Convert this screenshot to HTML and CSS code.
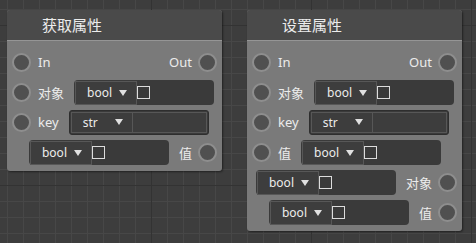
FILE: index.html
```html
<!DOCTYPE html>
<html lang="zh-CN">
<head>
    <meta charset="UTF-8">
    <meta name="viewport" content="width=device-width, initial-scale=1.0">
    <title>节点编辑器</title>
    <link rel="stylesheet" href="styles.css">
</head>
<body>
    <div class="canvas">
        <div class="node">
            <div class="node-title">获取属性</div>
            <div class="node-body">
                <div class="row">
                    <span class="port"></span>
                    <span class="label">In</span>
                    <span class="label label-out">Out</span>
                    <span class="port"></span>
                </div>
                <div class="row">
                    <span class="port"></span>
                    <span class="label">对象</span>
                    <div class="field">
                        <div class="select"><span>bool</span><i class="caret"></i></div>
                        <span class="check"></span>
                    </div>
                </div>
                <div class="row">
                    <span class="port"></span>
                    <span class="label">key</span>
                    <div class="field field-input">
                        <div class="select"><span>str</span><i class="caret"></i></div>
                        <div class="text-box"></div>
                    </div>
                </div>
                <div class="row row-right">
                    <div class="field">
                        <div class="select"><span>bool</span><i class="caret"></i></div>
                        <span class="check"></span>
                    </div>
                    <span class="label">值</span>
                    <span class="port"></span>
                </div>
            </div>
        </div>

        <div class="node">
            <div class="node-title">设置属性</div>
            <div class="node-body">
                <div class="row">
                    <span class="port"></span>
                    <span class="label">In</span>
                    <span class="label label-out">Out</span>
                    <span class="port"></span>
                </div>
                <div class="row">
                    <span class="port"></span>
                    <span class="label">对象</span>
                    <div class="field">
                        <div class="select"><span>bool</span><i class="caret"></i></div>
                        <span class="check"></span>
                    </div>
                </div>
                <div class="row">
                    <span class="port"></span>
                    <span class="label">key</span>
                    <div class="field field-input">
                        <div class="select"><span>str</span><i class="caret"></i></div>
                        <div class="text-box"></div>
                    </div>
                </div>
                <div class="row">
                    <span class="port"></span>
                    <span class="label">值</span>
                    <div class="field">
                        <div class="select"><span>bool</span><i class="caret"></i></div>
                        <span class="check"></span>
                    </div>
                </div>
                <div class="row row-right">
                    <div class="field">
                        <div class="select"><span>bool</span><i class="caret"></i></div>
                        <span class="check"></span>
                    </div>
                    <span class="label">对象</span>
                    <span class="port"></span>
                </div>
                <div class="row row-right">
                    <div class="field">
                        <div class="select"><span>bool</span><i class="caret"></i></div>
                        <span class="check"></span>
                    </div>
                    <span class="label">值</span>
                    <span class="port"></span>
                </div>
            </div>
        </div>
    </div>
</body>
</html>
```

FILE: styles.css
```css
html, body {
    height: 100%;
}
body {
    margin: 0;
    font-family: "Noto Sans", "Noto Sans CJK SC", sans-serif;
    color: #ececec;
    background-color: #3d3d3d;
    background-image:
        linear-gradient(90deg, #333 1px, transparent 1px),
        linear-gradient(#333 1px, transparent 1px),
        linear-gradient(90deg, #474747 1px, transparent 1px),
        linear-gradient(#474747 1px, transparent 1px);
    background-size: 160px 160px, 160px 160px, 16px 16px, 16px 16px;
    background-position: 151px 25px, 151px 25px, 7px 9px, 7px 9px;
}
.canvas {
    display: flex;
    align-items: flex-start;
    gap: 25px;
    padding: 10px 0 0 7px;
}
.node {
    width: 215px;
    border-radius: 3px;
    background: #7a7a7a;
    box-shadow: 1px 1px 2px rgba(0,0,0,0.45);
    overflow: hidden;
}
.node-title {
    height: 30px;
    line-height: 30px;
    padding-left: 35px;
    font-size: 15px;
    background: #4a4a4a;
    border-bottom: 1px solid #959595;
}
.node-body {
    padding: 6px 5px 4px;
}
.row {
    display: flex;
    align-items: center;
    height: 30px;
    font-size: 13px;
}
.row-right {
    justify-content: flex-end;
}
.port {
    width: 15px;
    height: 15px;
    border: 2px solid #8e8e8e;
    border-radius: 50%;
    background: #505050;
    flex: none;
}
.label {
    margin: 0 10px 0 7px;
    white-space: nowrap;
}
.label-out {
    margin: 0 6px 0 auto;
}
.row-right .label {
    margin: 0 6px 0 10px;
}
.field {
    display: flex;
    align-items: center;
    width: 140px;
    height: 25px;
    padding: 1px 0 0 1px;
    box-sizing: border-box;
    background: #3a3a3a;
    border-radius: 4px;
}
.field-input {
    padding: 1px;
    border: 1px solid #2e2e2e;
    border-radius: 3px;
}
.select {
    display: flex;
    align-items: center;
    justify-content: space-between;
    width: 62px;
    height: 100%;
    box-sizing: border-box;
    padding: 0 9px 0 11px;
    border: 1px solid #575757;
    background: #3d3d3d;
    font-size: 12px;
}
.caret {
    width: 0;
    height: 0;
    border-left: 4px solid transparent;
    border-right: 4px solid transparent;
    border-top: 6px solid #e0e0e0;
}
.check {
    width: 13px;
    height: 13px;
    box-sizing: border-box;
    border: 1px solid #dcdcdc;
}
.text-box {
    flex: 1;
    height: 100%;
    box-sizing: border-box;
    border: 1px solid #575757;
    border-left: none;
    background: #3d3d3d;
}
```
